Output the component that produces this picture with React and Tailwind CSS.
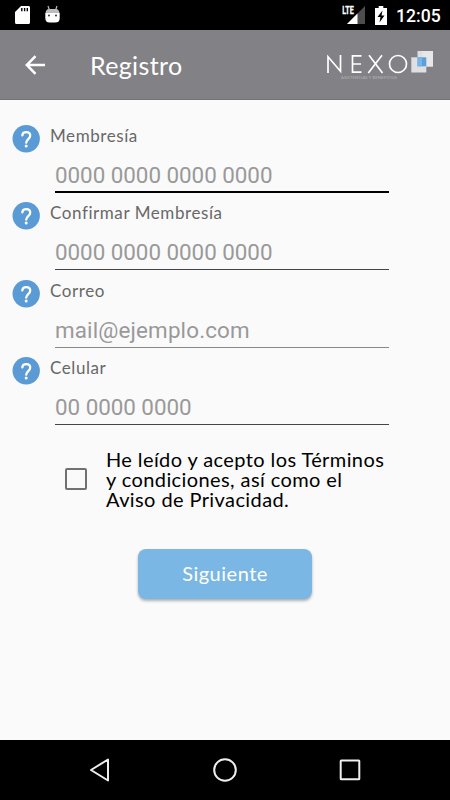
import React from "react";

const fields = [
  { label: "Membresía", hint: "0000 0000 0000 0000", hintClass: "tracking-[-0.03px] pb-[2px]", line: "border-b-2 border-black" },
  { label: "Confirmar Membresía", hint: "0000 0000 0000 0000", hintClass: "tracking-[-0.03px] pb-[3px]", line: "border-b border-[#444]" },
  { label: "Correo", hint: "mail@ejemplo.com", hintClass: "tracking-[0.15px] pb-[3px]", line: "border-b border-[#888]" },
  { label: "Celular", hint: "00 0000 0000", hintClass: "tracking-[-0.03px] pb-[3px]", line: "border-b border-[#444]" },
];

function StatusBar() {
  return (
    <div className="flex h-[30px] shrink-0 items-center bg-black pl-[15px] pr-[10px] text-white">
      <svg width="15" height="18" viewBox="0 0 15 18">
        <path d="M6 0h7.2A1.6 1.6 0 0 1 15 1.6v14.8a1.6 1.6 0 0 1-1.8 1.6H1.8A1.7 1.7 0 0 1 0 16.4V6z" fill="white" />
        <path d="M6.8 2v3.3M9.6 2v3.3M12.3 2v3.3" stroke="black" strokeWidth="1.4" />
      </svg>
      <svg className="mb-[3px] ml-[15px]" width="15" height="18" viewBox="0 0 15 18">
        <path d="M3 1l1.4 4M12 1l-1.4 4" stroke="#bbb" strokeWidth="1.2" />
        <path d="M0.5 8Q1 4 4 4h7q3 0 3.5 4z" fill="#bdbdbd" />
        <path d="M0.3 8h14.4v5q0 4.5-4.4 4.5H4.7Q.3 17.5.3 13z" fill="white" />
        <circle cx="4" cy="10.5" r="1" fill="#333" />
        <circle cx="11" cy="10.5" r="1" fill="#333" />
      </svg>
      <svg className="ml-auto" width="24" height="20" viewBox="0 0 24 20">
        <path d="M23 1v18H5z" fill="#4d4d4d" />
        <path d="M15.5 8.5V19H5z" fill="white" />
        <path d="M0 0h13v10H0z" fill="black" />
        <text x="0.3" y="9.2" fill="white" stroke="white" strokeWidth="0.3" fontFamily="Roboto, sans-serif" fontWeight="700" fontSize="10" textLength="11.5" lengthAdjust="spacingAndGlyphs">LTE</text>
      </svg>
      <svg className="ml-[9px]" width="12" height="19" viewBox="0 0 12 19">
        <path d="M3.7 0h4.6v2H12v17H0V2h3.7z" fill="white" />
        <path d="M7.5 4.5L2.5 11h3l-1 5.5 5-7h-3z" fill="black" />
      </svg>
      <span className="ml-[9px] mt-[2px] w-[44px] whitespace-nowrap font-['Roboto',sans-serif] text-[17.6px] font-medium leading-[20px]">12:05</span>
    </div>
  );
}

function Logo() {
  return (
    <svg className="ml-auto" width="108" height="32" viewBox="326 49 108 32">
      <g fill="none" stroke="white" strokeWidth="1.7">
        <path d="M328 73V56.8L340.5 71.2V55" />
        <path d="M361.5 55.9H352.5V72.2H361.5M352.5 64H361" />
        <path d="M369 55.3L382.5 73M382 55.3L368.3 73" />
        <circle cx="398" cy="64" r="8.5" />
      </g>
      <text x="341" y="79.2" fill="#b8b7b9" fontFamily="Lato, sans-serif" fontSize="4" textLength="56">ASISTENCIAS Y BENEFICIOS</text>
      <path d="M417.5 51h15.5v15.5h-15.5z" fill="#dedfe1" />
      <path d="M422.5 51h10.5v15.5h-10.5z" fill="#e7e7e8" />
      <path d="M411.3 57.3h15v15.2h-15z" fill="#dfe0e2" />
      <path d="M417.5 57.3h8.8v9h-8.8z" fill="#5b9fdb" />
      <path d="M417.5 57.3h4.5v9h-4.5z" fill="#78b5e7" />
    </svg>
  );
}

function HelpIcon() {
  return (
    <svg className="mt-[5px] shrink-0" width="28" height="28" viewBox="0 0 28 28">
      <circle cx="14.2" cy="13.8" r="13.7" fill="#5b9bd5" />
      <path d="M10.3 10.4C10.5 8.3 12 7.2 14.2 7.2s4 1.3 4 3.5c0 3.2-4 3.6-4 7" fill="none" stroke="white" strokeWidth="2.3" strokeLinecap="round" />
      <circle cx="14.2" cy="21" r="1.5" fill="white" />
    </svg>
  );
}

function Field({ label, hint, hintClass, line }) {
  return (
    <div className="flex h-[77.4px] pl-[12px]">
      <HelpIcon />
      <div className="ml-[10px] w-[339px]">
        <div className="h-[24px] whitespace-nowrap pt-[4px] text-[17px] leading-[23px] tracking-[0.57px] text-[#686868]">{label}</div>
        <div className={`ml-[5px] flex h-[49px] items-end font-['Roboto',sans-serif] text-[22.4px] leading-[28px] text-[#999] ${hintClass} ${line}`}>{hint}</div>
      </div>
    </div>
  );
}

export default function App() {
  return (
    <div className="flex h-[800px] w-[450px] flex-col overflow-hidden bg-[#fafafa] font-['Lato',sans-serif]">
      <StatusBar />
      <header className="flex h-[70px] shrink-0 items-center border-b border-[#747376] bg-[#828185] pl-[25px] pr-[16px] text-white">
        <svg width="20" height="20" viewBox="0 0 20 20" fill="none" stroke="white" strokeWidth="2.5">
          <path d="M20 10H2.5M10.5 1.2L1.8 10l8.7 8.8" />
        </svg>
        <h1 className="ml-[45px] text-[25px] leading-[32px] tracking-[0.35px]">Registro</h1>
        <Logo />
      </header>
      <main className="flex flex-1 flex-col pt-[20px]">
        {fields.map((field) => (
          <Field key={field.label} {...field} />
        ))}
        <label className="mt-[19px] flex pl-[65px]">
          <span className="mt-[19px] h-[22px] w-[22px] shrink-0 rounded-[2px] border-2 border-[#717171]" />
          <span className="ml-[19px] whitespace-nowrap text-[20px] leading-[20px] tracking-[0.4px] text-black">
            He leído y acepto los Términos
            <br />y condiciones, así como el
            <br />Aviso de Privacidad.
          </span>
        </label>
        <button className="ml-[138px] mt-[40.4px] h-[50px] w-[174px] rounded-[8px] bg-[#7ab7e4] pb-[2px] text-[20px] tracking-[0.5px] text-white shadow-[0_2px_3px_rgba(0,0,0,0.3)]">Siguiente</button>
      </main>
      <nav className="flex h-[60px] shrink-0 items-center justify-between bg-black pl-[89px] pr-[89px]">
        <svg width="22" height="26" viewBox="0 0 22 26" fill="none" stroke="#eee" strokeWidth="2" strokeLinejoin="round">
          <path d="M19 2.5v21L2 13z" />
        </svg>
        <svg width="26" height="26" viewBox="0 0 26 26" fill="none" stroke="#eee" strokeWidth="2">
          <circle cx="13" cy="13" r="10.8" />
        </svg>
        <svg width="22" height="22" viewBox="0 0 22 22" fill="none" stroke="#eee" strokeWidth="2">
          <rect x="1.7" y="1.5" width="18.6" height="18.8" rx="0.5" />
        </svg>
      </nav>
    </div>
  );
}
